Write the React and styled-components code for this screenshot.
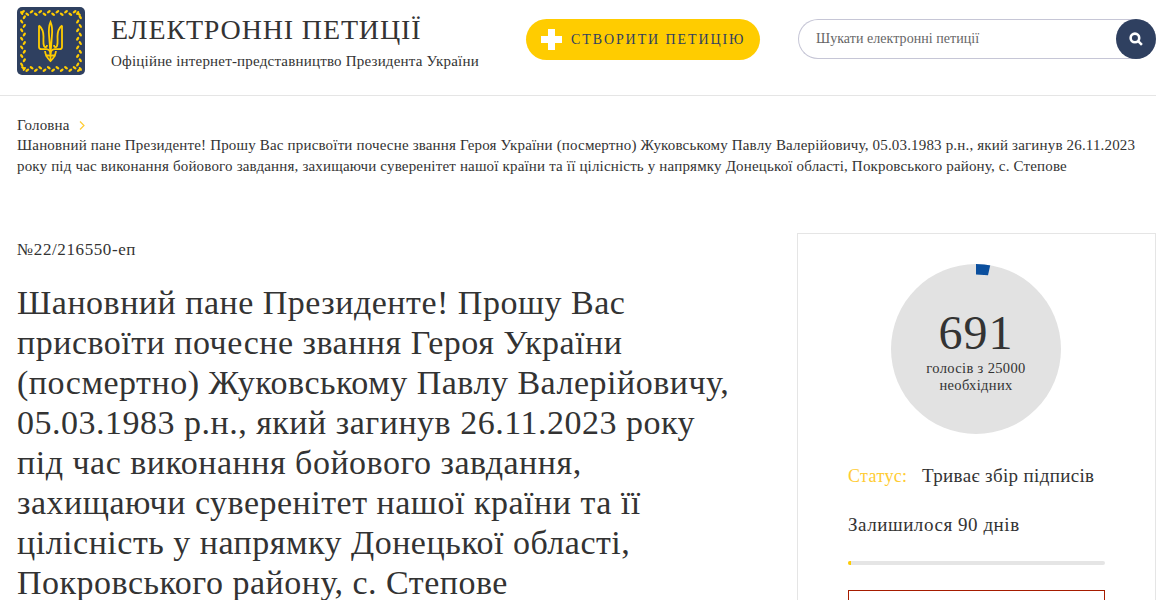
import React from 'react';
import styled, { createGlobalStyle } from 'styled-components';

const GlobalStyle = createGlobalStyle`
  html, body {
    margin: 0;
    height: 100%;
    overflow: hidden;
    background: #fff;
  }
  body {
    font-family: "Liberation Serif", serif;
    color: #333;
    font-variant-numeric: oldstyle-nums;
  }
`;

const Header = styled.header`
  display: flex;
  align-items: flex-start;
  height: 96px;
  box-sizing: border-box;
  border-bottom: 1px solid #e5e5e5;
  padding: 7px 0 0 17px;
`;

const Logo = styled.svg`
  display: block;
  width: 68px;
  height: 68px;
  flex: none;
`;

const Brand = styled.div`
  margin: 7px 0 0 26px;
  width: 415px;
`;

const BrandTitle = styled.div`
  font-size: 28px;
  line-height: 32px;
  letter-spacing: 0.85px;
  color: #333;
`;

const BrandSub = styled.div`
  margin-top: 5px;
  font-size: 15px;
  line-height: 20px;
  letter-spacing: 0.2px;
  color: #333;
`;

const CreateButton = styled.a`
  display: flex;
  align-items: center;
  width: 234px;
  height: 41px;
  margin-top: 12px;
  padding-left: 15px;
  box-sizing: border-box;
  background: #ffcc00;
  border-radius: 21px;
  color: #2f4060;
  font-size: 14px;
  letter-spacing: 1.9px;
`;

const PlusIcon = styled.span`
  position: relative;
  width: 21px;
  height: 21px;
  margin-right: 9px;
  flex: none;
  &::before,
  &::after {
    content: '';
    position: absolute;
    background: #fff;
  }
  &::before {
    left: 0;
    right: 0;
    top: 7px;
    height: 7px;
  }
  &::after {
    top: 0;
    bottom: 0;
    left: 7px;
    width: 7px;
  }
`;

const Search = styled.div`
  display: flex;
  align-items: center;
  justify-content: space-between;
  width: 358px;
  height: 40px;
  margin: 12px 0 0 38px;
  box-sizing: border-box;
  border: 1px solid #c6c6d6;
  border-right: 0;
  border-radius: 20px;
`;

const SearchText = styled.span`
  margin-left: 17px;
  font-size: 14px;
  letter-spacing: 0.05px;
  color: #666;
`;

const SearchButton = styled.span`
  display: flex;
  align-items: center;
  justify-content: center;
  width: 40px;
  height: 40px;
  margin: -1px 0;
  border-radius: 50%;
  background: #2f4060;
`;

const Crumbs = styled.nav`
  padding: 20px 17px 0;
  font-size: 15px;
  line-height: 21px;
  letter-spacing: 0.17px;
  color: #333;
`;

const CrumbHome = styled.div`
  display: flex;
  align-items: center;
  height: 19px;
`;

const Chevron = styled.svg`
  width: 6px;
  height: 9px;
  margin-left: 9px;
`;

const Body = styled.main`
  display: flex;
  justify-content: space-between;
  align-items: flex-start;
  margin-top: 56px;
  padding-left: 17px;
`;

const Article = styled.article`
  width: 722px;
  padding-top: 7px;
`;

const PetitionNumber = styled.div`
  font-size: 17px;
  line-height: 20px;
  letter-spacing: 0.6px;
`;

const PetitionTitle = styled.h1`
  margin: 23px 0 0;
  font-size: 34px;
  line-height: 40px;
  font-weight: 400;
  letter-spacing: 0.5px;
  color: #333;
`;

const Side = styled.aside`
  width: 359px;
  height: 420px;
  box-sizing: border-box;
  border: 1px solid #e5e5e5;
  padding: 30px 50px 0;
`;

const Counter = styled.div`
  position: relative;
  width: 170px;
  height: 170px;
  margin-left: 43px;
  border-radius: 50%;
  background: #e2e2e2;
  overflow: hidden;
  text-align: center;
`;

const CounterArc = styled.svg`
  position: absolute;
  left: 0;
  top: 0;
  width: 170px;
  height: 170px;
`;

const CounterValue = styled.div`
  position: relative;
  padding-top: 42px;
  font-size: 48px;
  line-height: 54px;
  letter-spacing: 1px;
  color: #333;
`;

const CounterNote = styled.div`
  position: relative;
  width: 130px;
  margin: 0 auto;
  font-size: 14.5px;
  line-height: 17px;
  letter-spacing: 0.35px;
`;

const StatusRow = styled.div`
  display: flex;
  margin-top: 30px;
  font-size: 19px;
  line-height: 24px;
  letter-spacing: 0.35px;
`;

const StatusLabel = styled.span`
  width: 74px;
  font-size: 18px;
  color: #ffcc33;
`;

const DaysLeft = styled.div`
  margin-top: 25px;
  font-size: 19px;
  line-height: 24px;
  letter-spacing: 0.55px;
`;

const ProgressTrack = styled.div`
  height: 4px;
  margin-top: 24px;
  border-radius: 2px;
  background: #e5e5e5;
  overflow: hidden;
`;

const ProgressFill = styled.div`
  height: 100%;
  background: #ffcc00;
`;

const SignBox = styled.div`
  height: 60px;
  margin-top: 25px;
  box-sizing: border-box;
  border: 1px solid #a61c00;
`;

// листя вінка: пари вздовж кожної сторони, зі зсувом від осьової
const leaves = () => {
  const items = [];
  for (let i = 0; i < 14; i++) {
    const p = 6 + i * 4.3;
    const off = i % 2 ? 1.3 : -1.3;
    const tilt = i % 2 ? 35 : -35;
    items.push(
      [p, 6 + off, tilt],
      [p, 62 + off, -tilt],
      [6 + off, p, 90 + tilt],
      [62 + off, p, 90 - tilt]
    );
  }
  return items;
};

function LogoMark() {
  return (
    <Logo viewBox="0 0 68 68">
      <rect width="68" height="68" rx="5" fill="#2f4060" />
      {leaves().map(([x, y, r], i) => (
        <ellipse key={i} cx={x} cy={y} rx="2.200" ry="1.200" fill="#ffcc00" transform={`rotate(${r} ${x} ${y})`} />
      ))}
      <g fill="none" stroke="#ffcc00" strokeWidth="1.800">
        <path d="M33.500 15c-1.800 4-2 8-1.400 14l1.400 18 1.400-18c.6-6 .4-10-1.400-14z" />
        <path d="M22 18.500v21.500c0 1.600 1 2.200 2.600 2.200h4.900c1.400 0 2.400.6 4 2.800 1.600-2.200 2.600-2.800 4-2.800h4.900c1.600 0 2.600-.6 2.600-2.200V18.500" />
        <path d="M22 18.500c3 2.500 4.500 6 4.500 11 0 4-.5 7 .5 9.500 1 1.800 3 1.500 3-1" />
        <path d="M45 18.500c-3 2.500-4.500 6-4.500 11 0 4 .5 7-.5 9.500-1 1.800-3 1.500-3-1" />
        <path d="M28 44c.5 4 2.500 7.500 5.500 10 3-2.500 5-6 5.500-10" />
        <path d="M33.500 44v10M28.500 48.500h10" />
      </g>
    </Logo>
  );
}

export default function App() {
  return (
    <>
      <GlobalStyle />
      <Header>
        <LogoMark />
        <Brand>
          <BrandTitle>ЕЛЕКТРОННІ ПЕТИЦІЇ</BrandTitle>
          <BrandSub>Офіційне інтернет-представництво Президента України</BrandSub>
        </Brand>
        <CreateButton>
          <PlusIcon />
          СТВОРИТИ ПЕТИЦІЮ
        </CreateButton>
        <Search>
          <SearchText>Шукати електронні петиції</SearchText>
          <SearchButton>
            <svg width="14" height="14" viewBox="0 0 13 13" fill="none" stroke="#fff" strokeWidth="2.400">
              <circle cx="5.500" cy="5.500" r="4" />
              <path d="M8.500 8.500l3.500 3.500" />
            </svg>
          </SearchButton>
        </Search>
      </Header>
      <Crumbs>
        <CrumbHome>
          Головна
          <Chevron viewBox="0 0 6 9" fill="none" stroke="#ffcc33" strokeWidth="1.200">
            <path d="M1 .5l4 4-4 4" />
          </Chevron>
        </CrumbHome>
        Шановний пане Президенте! Прошу Вас присвоїти почесне звання Героя України (посмертно) Жуковському Павлу Валерійовичу, 05.03.1983 р.н., який загинув 26.11.2023 року під час виконання бойового завдання, захищаючи суверенітет нашої країни та її цілісність у напрямку Донецької області, Покровського району, с. Степове
      </Crumbs>
      <Body>
        <Article>
          <PetitionNumber>№22/216550-еп</PetitionNumber>
          <PetitionTitle>
            Шановний пане Президенте! Прошу Вас присвоїти почесне звання Героя України (посмертно) Жуковському Павлу Валерійовичу, 05.03.1983 р.н., який загинув 26.11.2023 року під час виконання бойового завдання, захищаючи суверенітет нашої країни та її цілісність у напрямку Донецької області, Покровського району, с. Степове
          </PetitionTitle>
        </Article>
        <Side>
          <Counter>
            <CounterArc viewBox="0 0 170 170">
              <path d="M85 0h14.500l-2.500 11.200L85 10.500z" fill="#0b4f9e" />
            </CounterArc>
            <CounterValue>691</CounterValue>
            <CounterNote>голосів з 25000 необхідних</CounterNote>
          </Counter>
          <StatusRow>
            <StatusLabel>Статус:</StatusLabel>
            Триває збір підписів
          </StatusRow>
          <DaysLeft>Залишилося 90 днів</DaysLeft>
          <ProgressTrack>
            <ProgressFill style={{ width: `${(691 / 25000) * 100 / 2.5}%` }} />
          </ProgressTrack>
          <SignBox />
        </Side>
      </Body>
    </>
  );
}
